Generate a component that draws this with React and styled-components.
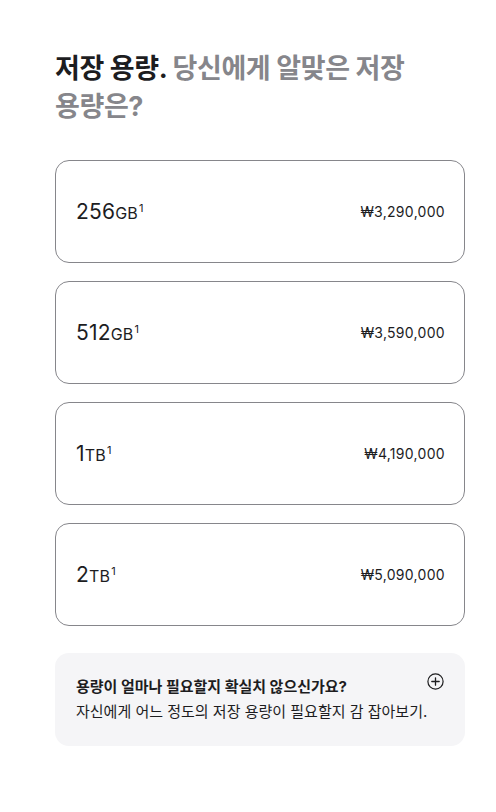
import styled, { createGlobalStyle } from "styled-components";

const GlobalStyle = createGlobalStyle`
  body {
    margin: 0;
    background: #fff;
    font-family: Inter, "Noto Sans CJK KR", sans-serif;
    color: #1d1d1f;
  }
`;

const Page = styled.div`
  padding: 50px 31px 60px 55px;
  display: flex;
  flex-direction: column;
`;

const Heading = styled.h2`
  margin: 0 0 34px;
  max-width: 370px;
  font-size: 27px;
  line-height: 38px;
  font-weight: 700;
  letter-spacing: -0.4px;
  word-break: keep-all;
  color: #1d1d1f;
`;

const Muted = styled.span`
  color: #86868b;
`;

const Options = styled.div`
  display: flex;
  flex-direction: column;
  gap: 18px;
`;

const Card = styled.button`
  box-sizing: border-box;
  height: 103px;
  display: flex;
  align-items: center;
  justify-content: space-between;
  padding: 0 19px 0 20px;
  border: 1px solid #86868b;
  border-radius: 14px;
  background: #fff;
  font-family: inherit;
  color: #1d1d1f;
  cursor: pointer;
`;

const Size = styled.span`
  font-size: 21px;
  font-weight: 400;
  letter-spacing: 0.2px;
`;

const Unit = styled.span`
  font-size: 16px;
`;

const Note = styled.sup`
  font-size: 11px;
  vertical-align: 7px;
  line-height: 0;
  margin-left: 1px;
`;

const Price = styled.span`
  font-size: 14px;
  letter-spacing: 0.3px;
  color: #1d1d1f;
`;

const Help = styled.div`
  margin-top: 27px;
  padding: 21px 21px 21px 21px;
  border-radius: 14px;
  background: #f5f5f7;
`;

const HelpTitleRow = styled.div`
  display: flex;
  justify-content: space-between;
  align-items: flex-start;
`;

const HelpTitle = styled.div`
  font-size: 15px;
  font-weight: 700;
  line-height: 25px;
`;

const HelpText = styled.div`
  font-size: 15px;
  line-height: 26px;
  color: #1d1d1f;
`;

const PlusIcon = () => (
  <svg width="17" height="17" viewBox="0 0 17 17" style={{ marginTop: -1 }}>
    <circle cx="8.5" cy="8.5" r="7.6" fill="none" stroke="#1d1d1f" strokeWidth="1.2" />
    <path d="M8.5 4.8v7.4M4.8 8.5h7.4" stroke="#1d1d1f" strokeWidth="1.3" strokeLinecap="round" />
  </svg>
);

const options = [
  { size: "256", unit: "GB", price: "₩3,290,000" },
  { size: "512", unit: "GB", price: "₩3,590,000" },
  { size: "1", unit: "TB", price: "₩4,190,000" },
  { size: "2", unit: "TB", price: "₩5,090,000" },
];

export default function App() {
  return (
    <>
      <GlobalStyle />
      <Page>
        <Heading>
          저장 용량. <Muted>당신에게 알맞은 저장 용량은?</Muted>
        </Heading>
        <Options>
          {options.map((o) => (
            <Card key={o.size + o.unit}>
              <Size>
                {o.size}
                <Unit>{o.unit}</Unit>
                <Note>1</Note>
              </Size>
              <Price>{o.price}</Price>
            </Card>
          ))}
        </Options>
        <Help>
          <HelpTitleRow>
            <HelpTitle>용량이 얼마나 필요할지 확실치 않으신가요?</HelpTitle>
            <PlusIcon />
          </HelpTitleRow>
          <HelpText>자신에게 어느 정도의 저장 용량이 필요할지 감 잡아보기.</HelpText>
        </Help>
      </Page>
    </>
  );
}
